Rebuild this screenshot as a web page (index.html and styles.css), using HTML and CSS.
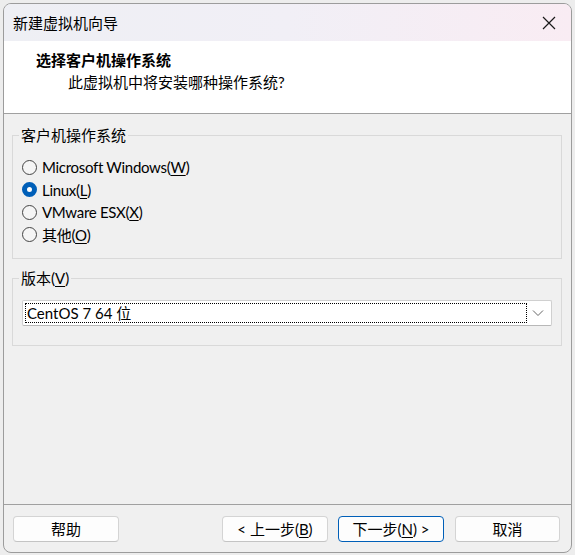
FILE: index.html
```html
<!DOCTYPE html>
<html lang="zh">
<head>
<meta charset="utf-8">
<title>新建虚拟机向导</title>
<link rel="stylesheet" href="styles.css">
</head>
<body>
<div class="window">
  <div class="titlebar">
    <span class="title">新建虚拟机向导</span>
    <span class="close">
      <svg width="14" height="14" viewBox="0 0 14 14"><path d="M1 1 L13 13 M13 1 L1 13" stroke="#1a1a1a" stroke-width="1.2" fill="none"/></svg>
    </span>
  </div>
  <div class="header">
    <div class="h-title">选择客户机操作系统</div>
    <div class="h-sub">此虚拟机中将安装哪种操作系统?</div>
  </div>
  <div class="body">
    <fieldset class="group g1">
      <legend>客户机操作系统</legend>
      <div class="radio"><span class="dot"></span><span class="lbl">Microsoft Windows(<u>W</u>)</span></div>
      <div class="radio"><span class="dot on"></span><span class="lbl">Linux(<u>L</u>)</span></div>
      <div class="radio"><span class="dot"></span><span class="lbl">VMware ESX(<u>X</u>)</span></div>
      <div class="radio"><span class="dot"></span><span class="lbl">其他(<u>O</u>)</span></div>
    </fieldset>
    <fieldset class="group g2">
      <legend>版本(<u>V</u>)</legend>
      <div class="combo">
        <div class="combo-val">CentOS 7 64 位</div>
        <span class="chev"><svg width="12" height="8" viewBox="0 0 12 8"><path d="M1 1.5 L6 6.5 L11 1.5" stroke="#666" stroke-width="1" fill="none"/></svg></span>
      </div>
    </fieldset>
  </div>
  <div class="footer">
    <button class="btn">帮助</button>
    <div class="spacer"></div>
    <button class="btn">&lt; 上一步(<u>B</u>)</button>
    <button class="btn primary">下一步(<u>N</u>) &gt;</button>
    <button class="btn cancel">取消</button>
  </div>
</div>
</body>
</html>
```
FILE: styles.css
```css
* { box-sizing: border-box; }
html, body { margin: 0; padding: 0; }
body {
  background: #ededed;
  width: 575px;
  height: 555px;
  padding: 3px 3px 2px 3px;
  font-family: Lato, "Noto Sans CJK SC", sans-serif;
  font-size: 15px;
  color: #000;
}
.window {
  width: 569px;
  height: 550px;
  border: 1px solid #9c9c9c;
  border-radius: 8px;
  overflow: hidden;
  background: #f0f0f0;
  display: flex;
  flex-direction: column;
}
.titlebar {
  height: 37px;
  flex: none;
  background: linear-gradient(90deg, #eeeff4 0%, #f1eff6 50%, #f9ecf3 100%);
  display: flex;
  align-items: center;
  padding-left: 9px;
  padding-right: 15px;
}
.title { flex: 1; line-height: 20px; }
.close { display: flex; width: 14px; height: 14px; }
.header {
  flex: none;
  height: 73px;
  background: #fff;
  border-bottom: 1px solid #a0a0a0;
  padding-top: 7px;
}
.h-title {
  font-weight: bold;
  padding-left: 32px;
  line-height: 24px;
}
.h-sub {
  padding-left: 64px;
  line-height: 20px;
}
.body {
  flex: 1;
  padding: 11px 9px 0 8px;
  display: flex;
  flex-direction: column;
  gap: 9px;
}
.group {
  margin: 0;
  border: 1px solid #d9d9d9;
  padding: 0 9px 0 9px;
  min-width: 0;
}
.group legend {
  padding: 0 2px;
  margin-left: -3px;
  line-height: 20px;
}
.g1 { height: 134px; padding-top: 11px; flex: none; }
.radio {
  display: flex;
  align-items: center;
  gap: 5px;
  height: 22.5px;
  line-height: 20px;
}
.lbl { letter-spacing: -0.3px; }
.dot {
  width: 15px;
  height: 15px;
  border: 1px solid #444;
  border-radius: 50%;
  background: #f5f5f5;
  flex: none;
}
.dot.on {
  border: 5px solid #005fb8;
  background: #fff;
}
.g2 { height: 78px; padding-top: 12px; flex: none; }
.combo {
  height: 26px;
  background: #fff;
  border: 1px solid #d0d0d0;
  border-bottom-color: #b8b8b8;
  border-radius: 2px;
  display: flex;
  align-items: center;
  padding: 2px;
}
.combo-val {
  flex: 1;
  height: 20px;
  border: 1px dotted #000;
  line-height: 18px;
  padding-left: 1px;
}
.chev {
  width: 22px;
  display: flex;
  justify-content: center;
}
.footer {
  flex: none;
  height: 48px;
  border-top: 1px solid #a0a0a0;
  display: flex;
  align-items: flex-start;
  padding: 11px 11px 0 9px;
}
.spacer { flex: 1; }
.btn {
  font-family: inherit;
  font-size: 15px;
  color: #000;
  width: 106px;
  height: 26px;
  background: #fdfdfd;
  border: 1px solid #d4d4d4;
  border-bottom-color: #c4c4c4;
  border-radius: 4px;
  padding: 0;
  line-height: 22px;
}
.btn.primary {
  border: 1px solid #005fb8;
  margin-left: 10px;
}
.btn.cancel { margin-left: 11px; width: 105px; }
u { text-decoration-thickness: 1px; text-underline-offset: 2px; }
```
